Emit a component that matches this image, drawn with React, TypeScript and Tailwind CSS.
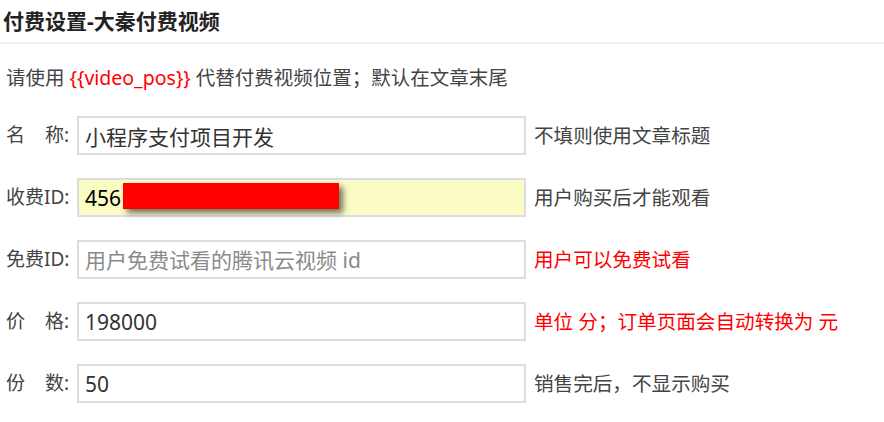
import React from "react";

const FONT = { fontFamily: '"Noto Sans", "Noto Sans CJK SC", sans-serif' };

type Row = {
  label: React.ReactNode;
  value?: string;
  placeholder?: string;
  hint: string;
  red?: boolean;
  yellow?: boolean;
  masked?: boolean;
};

const rows: Row[] = [
  { label: <>名<span className="inline-block w-[20px]" />称:</>, value: "小程序支付项目开发", hint: "不填则使用文章标题" },
  { label: "收费ID:", value: "456", hint: "用户购买后才能观看", yellow: true, masked: true },
  { label: "免费ID:", placeholder: "用户免费试看的腾讯云视频 id", hint: "用户可以免费试看", red: true },
  { label: <>价<span className="inline-block w-[20px]" />格:</>, value: "198000", hint: "单位 分；订单页面会自动转换为 元", red: true },
  { label: <>份<span className="inline-block w-[20px]" />数:</>, value: "50", hint: "销售完后，不显示购买" },
];

export default function App() {
  return (
    <div className="w-[884px] h-[422px] bg-white overflow-hidden" style={FONT}>
      {/* header */}
      <div className="h-[44px] flex items-center px-[3px] border-b-2 border-[#eeeeee]">
        <h1 className="text-[21px] font-bold text-[#222] leading-none">付费设置-大秦付费视频</h1>
      </div>

      <div className="pl-[6px] pt-[22px]">
        <p className="text-[19.5px] text-[#444] leading-[24px]">
          请使用 <span className="text-[#ff0000]">{"{{video_pos}}"}</span> 代替付费视频位置；默认在文章末尾
        </p>

        <div className="mt-[26px] flex flex-col gap-[23px]">
          {rows.map((r, i) => (
            <div key={i} className="flex items-center h-[39px]">
              <label className="w-[71px] text-[19px] text-[#444] whitespace-nowrap">{r.label}</label>
              <div className="relative">
                <input
                  readOnly
                  defaultValue={r.value}
                  placeholder={r.placeholder}
                  className={`w-[449px] h-[39px] border-2 border-[#dddddd] px-[6px] text-[21px] outline-none placeholder:text-[#8a8a8a] ${
                    r.yellow ? "bg-[#fafcc4] text-black" : "bg-white text-[#333]"
                  }`}
                  style={FONT}
                />
                {r.masked && (
                  <div className="absolute left-[46px] top-[5px] w-[216px] h-[26px] bg-[#ff0000] shadow-[4px_4px_6px_rgba(0,0,0,0.55)]" />
                )}
              </div>
              <span className={`ml-[8px] text-[19.6px] ${r.red ? "text-[#ff0000]" : "text-[#444]"}`}>{r.hint}</span>
            </div>
          ))}
        </div>
      </div>
    </div>
  );
}
